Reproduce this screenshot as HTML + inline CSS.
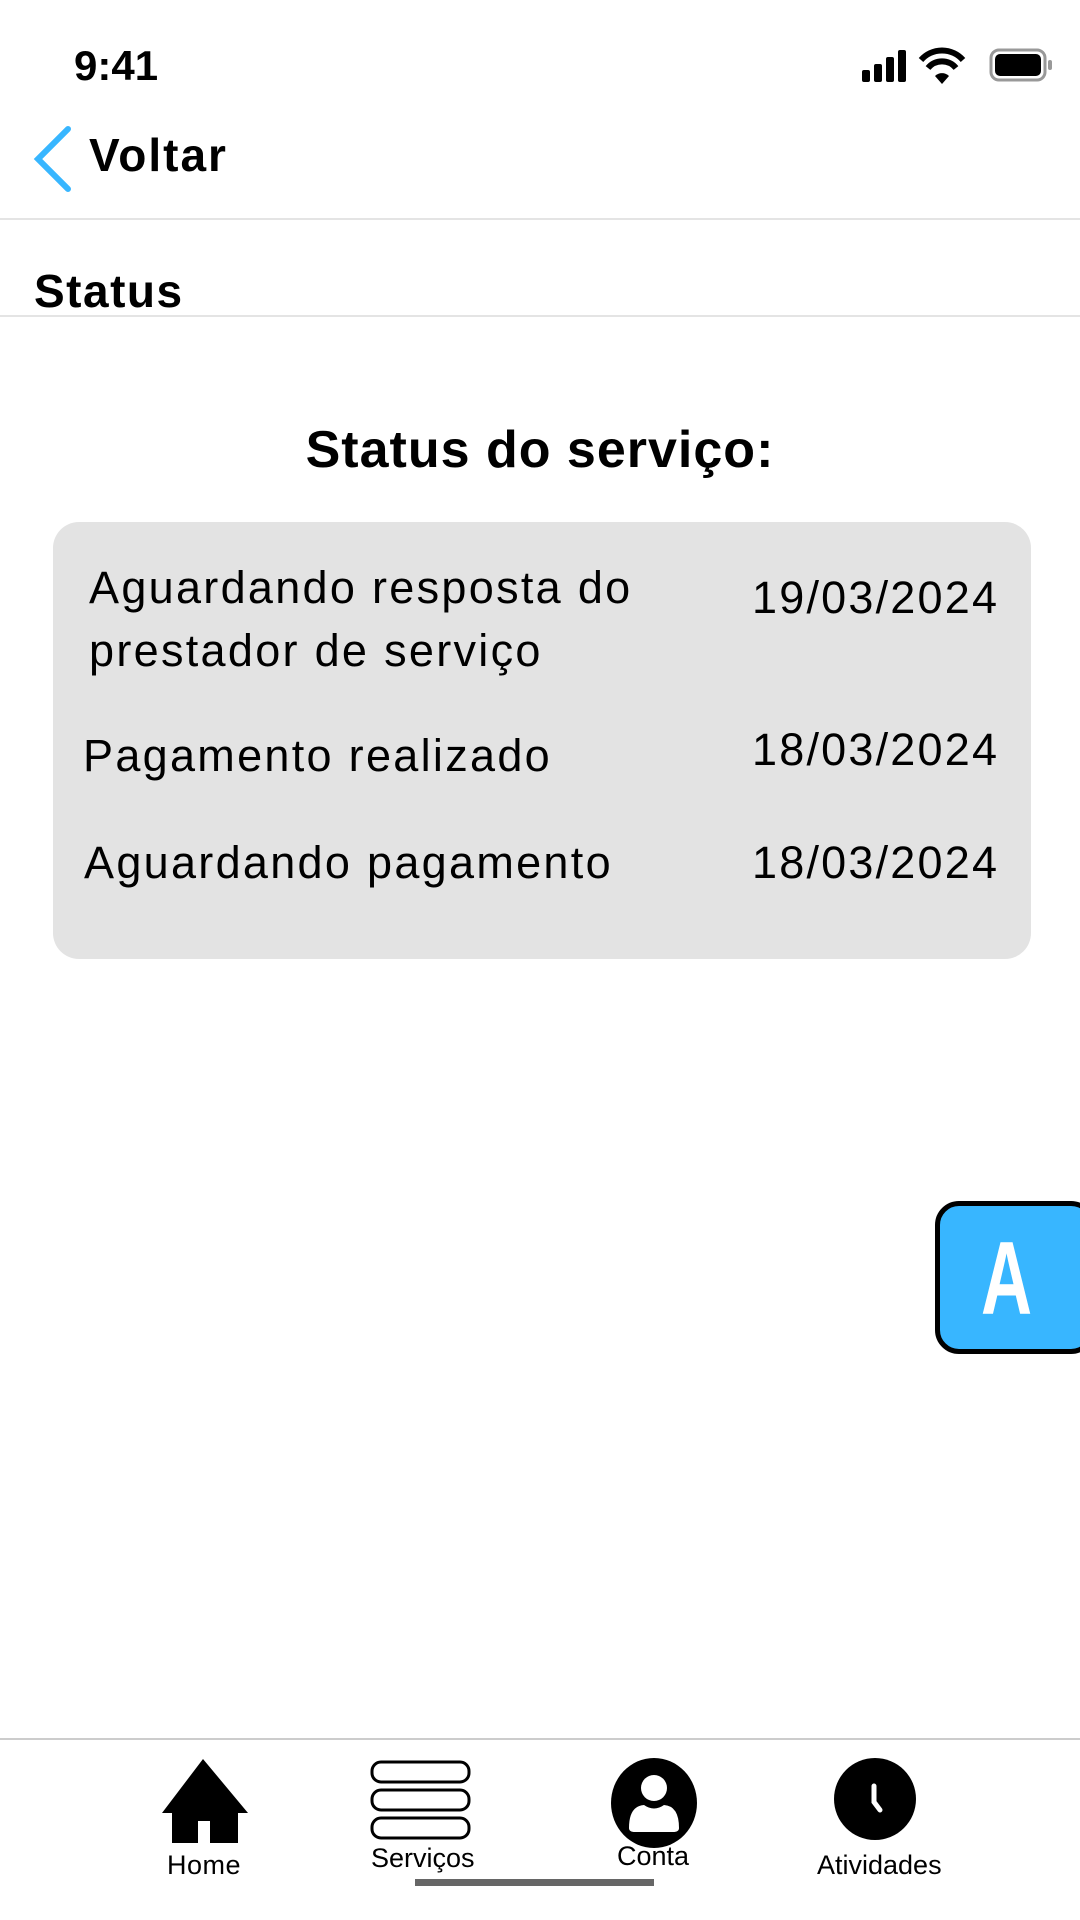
<!DOCTYPE html>
<html><head><meta charset="utf-8"><style>
*{margin:0;padding:0;box-sizing:border-box}
body{width:1080px;height:1920px;background:#fff;position:relative;overflow:hidden;font-family:"Liberation Sans",sans-serif;color:#000}
.a{position:absolute;white-space:nowrap}
.hl{position:absolute;left:0;width:1080px;height:2px;background:#e4e4e4}
.t{font-size:45px;line-height:1;letter-spacing:2.3px}
.d{font-size:45px;line-height:1;letter-spacing:2.2px}
</style></head><body>
<div class="a" style="left:74px;top:42px;font-size:42px;font-weight:bold;">9:41</div>
<svg class="a" style="left:858px;top:46px" width="200" height="40" viewBox="0 0 200 40">
<rect x="4" y="24" width="8" height="12" rx="2"/><rect x="16" y="18" width="8" height="18" rx="2"/><rect x="28" y="11" width="8" height="25" rx="2"/><rect x="40" y="4" width="8" height="32" rx="2"/>
<path d="M63 14 A28 28 0 0 1 105 14" stroke="#000" stroke-width="6" fill="none"/>
<path d="M70 22 A18 18 0 0 1 98 22" stroke="#000" stroke-width="6" fill="none"/>
<path d="M77 30 L84 38 L91 30 A10 10 0 0 0 77 30Z"/>
<rect x="133" y="4" width="54" height="30" rx="8" fill="none" stroke="#999" stroke-width="3"/>
<rect x="137" y="8" width="46" height="22" rx="5"/>
<rect x="190" y="14" width="4" height="10" rx="2" fill="#999"/>
</svg>
<svg class="a" style="left:32px;top:125px" width="42" height="68"><path d="M36 4 L6 34 L36 64" stroke="#38b6ff" stroke-width="6" fill="none" stroke-linecap="round"/></svg>
<div class="a" style="left:89px;top:128px;font-size:46px;font-weight:bold;letter-spacing:2px">Voltar</div>
<div class="hl" style="top:218px"></div>
<div class="a" style="left:34px;top:264px;font-size:46px;font-weight:bold;letter-spacing:1.5px">Status</div>
<div class="hl" style="top:315px"></div>
<div class="a" style="left:0;width:1080px;text-align:center;top:420px;font-size:52px;font-weight:bold;letter-spacing:1px">Status do serviço:</div>
<div class="a" style="left:53px;top:522px;width:978px;height:437px;background:#e3e3e3;border-radius:26px"></div>
<div class="a t" style="left:89px;top:565px">Aguardando resposta do</div>
<div class="a t" style="left:89px;top:628px">prestador de serviço</div>
<div class="a d" style="left:752px;top:575px">19/03/2024</div>
<div class="a t" style="left:83px;top:733px">Pagamento realizado</div>
<div class="a d" style="left:752px;top:727px">18/03/2024</div>
<div class="a t" style="left:84px;top:840px">Aguardando pagamento</div>
<div class="a d" style="left:752px;top:840px">18/03/2024</div>
<div class="a" style="left:935px;top:1201px;width:160px;height:153px;background:#38b6ff;border:5px solid #000;border-radius:24px"></div>
<div class="a" style="left:981px;top:1220px;font-size:104px;font-weight:bold;color:#fff;transform:scaleX(0.68);transform-origin:left top">A</div>
<div class="hl" style="top:1738px;background:#ccc"></div>
<svg class="a" style="left:158px;top:1757px" width="94" height="86"><path d="M45 2 L4 56 L14 56 L14 86 L40 86 L40 64 L52 64 L52 86 L80 86 L80 56 L90 56 Z"/></svg>
<div class="a" style="left:167px;top:1850px;font-size:27px;letter-spacing:0.5px">Home</div>
<svg class="a" style="left:370px;top:1760px" width="102" height="80"><g fill="#fff" stroke="#000" stroke-width="3"><rect x="2" y="2" width="97" height="20" rx="9"/><rect x="2" y="30" width="97" height="20" rx="9"/><rect x="2" y="58" width="97" height="20" rx="9"/></g></svg>
<div class="a" style="left:371px;top:1843px;font-size:27px">Serviços</div>
<svg class="a" style="left:611px;top:1758px" width="88" height="90"><ellipse cx="43" cy="45" rx="43" ry="45"/><circle cx="43" cy="30" r="13" fill="#fff"/><path d="M18 70 Q18 48 33 47 Q43 54 53 47 Q68 48 68 70 Q68 74 62 74 L24 74 Q18 74 18 70Z" fill="#fff"/></svg>
<div class="a" style="left:617px;top:1841px;font-size:27px">Conta</div>
<svg class="a" style="left:834px;top:1758px" width="84" height="84"><ellipse cx="41" cy="41" rx="41" ry="41"/><path d="M40 28 L40 44 L46 52" stroke="#fff" stroke-width="5" fill="none" stroke-linecap="round"/></svg>
<div class="a" style="left:817px;top:1850px;font-size:27px">Atividades</div>
<div class="a" style="left:415px;top:1879px;width:239px;height:7px;background:#666"></div>
</body></html>
